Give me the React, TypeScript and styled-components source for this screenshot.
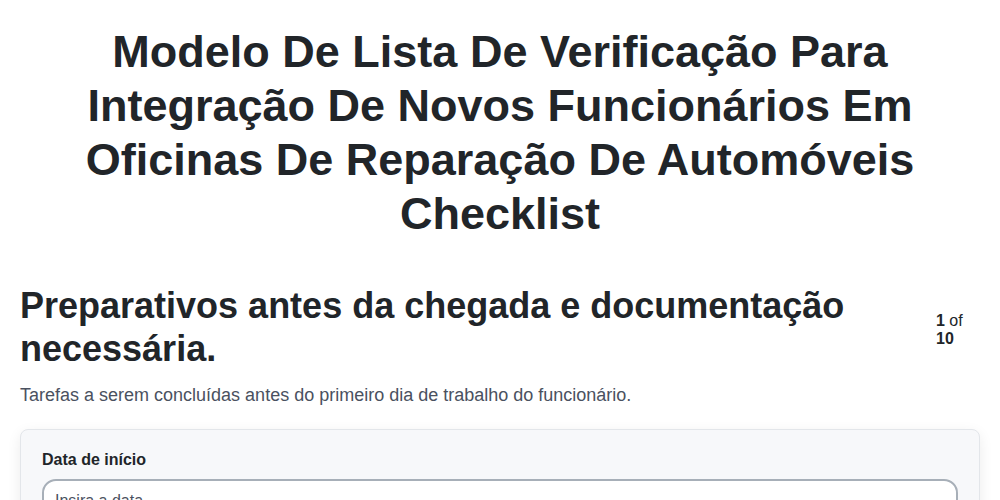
import React from "react";
import styled, { createGlobalStyle } from "styled-components";

const Global = createGlobalStyle`
  html, body { margin: 0; padding: 0; background: #ffffff; }
  body { font-family: "Liberation Sans", Arial, sans-serif; color: #212529; }
  * { box-sizing: border-box; }
`;

const Page = styled.main`
  padding: 0 20px;
`;

const Title = styled.h1`
  margin: 25px auto 0;
  max-width: 880px;
  text-align: center;
  font-size: 45px;
  line-height: 54px;
  font-weight: 700;
  color: #212529;
`;

const Section = styled.section`
  margin-top: 43px;
`;

const HeaderRow = styled.div`
  display: flex;
  align-items: center;
  justify-content: space-between;
  gap: 20px;
`;

const Heading = styled.h2`
  margin: 0;
  font-size: 36px;
  line-height: 43px;
  font-weight: 700;
  color: #212529;
  max-width: 880px;
`;

const Counter = styled.div`
  width: 44px;
  margin-top: 6px;
  font-size: 16px;
  line-height: 18px;
  color: #212529;
  b { font-weight: 700; }
`;

const Sub = styled.p`
  margin: 13px 0 0;
  font-size: 18px;
  line-height: 24px;
  color: #4a5160;
`;

const Card = styled.div`
  margin-top: 22px;
  background: #f7f8fa;
  border: 1px solid #e3e6ea;
  border-radius: 8px;
  box-shadow: 0 4px 14px rgba(0, 0, 0, 0.08);
  padding: 21px 21px 20px;
`;

const Label = styled.label`
  display: block;
  font-size: 16px;
  font-weight: 700;
  color: #212529;
  margin-bottom: 10px;
`;

const Input = styled.input`
  display: block;
  width: 100%;
  height: 44px;
  border: 2px solid #a7afb8;
  border-radius: 14px;
  background: #ffffff;
  padding: 0 11px;
  font-family: "Liberation Sans", Arial, sans-serif;
  font-size: 16px;
  color: #212529;
  &::placeholder { color: #4a5160; }
`;

export default function App() {
  return (
    <>
      <Global />
      <Page>
        <Title>
          Modelo De Lista De Verificação Para Integração De Novos Funcionários Em
          Oficinas De Reparação De Automóveis Checklist
        </Title>
        <Section>
          <HeaderRow>
            <Heading>Preparativos antes da chegada e documentação necessária.</Heading>
            <Counter>
              <b>1</b> of <b>10</b>
            </Counter>
          </HeaderRow>
          <Sub>Tarefas a serem concluídas antes do primeiro dia de trabalho do funcionário.</Sub>
          <Card>
            <Label>Data de início</Label>
            <Input placeholder="Insira a data" />
          </Card>
        </Section>
      </Page>
    </>
  );
}
